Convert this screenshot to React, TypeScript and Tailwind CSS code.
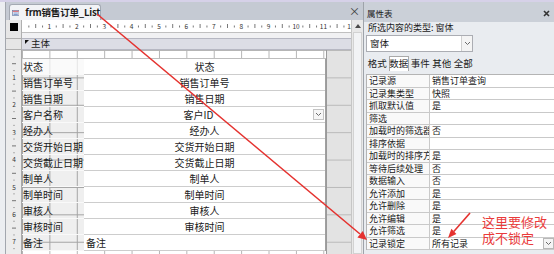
import React from 'react';

interface FormRow {
  label: string;
  field: string;
  combo?: boolean;
  left?: boolean;
}

const formRows: FormRow[] = [
  { label: '状态', field: '状态' },
  { label: '销售订单号', field: '销售订单号' },
  { label: '销售日期', field: '销售日期' },
  { label: '客户名称', field: '客户ID', combo: true },
  { label: '经办人', field: '经办人' },
  { label: '交货开始日期', field: '交货开始日期' },
  { label: '交货截止日期', field: '交货截止日期' },
  { label: '制单人', field: '制单人' },
  { label: '制单时间', field: '制单时间' },
  { label: '审核人', field: '审核人' },
  { label: '审核时间', field: '审核时间' },
  { label: '备注', field: '备注', left: true },
];

const props: [string, string][] = [
  ['记录源', '销售订单查询'],
  ['记录集类型', '快照'],
  ['抓取默认值', '是'],
  ['筛选', ''],
  ['加载时的筛选器', '否'],
  ['排序依据', ''],
  ['加载时的排序方式', '是'],
  ['等待后续处理', '否'],
  ['数据输入', '否'],
  ['允许添加', '是'],
  ['允许删除', '是'],
  ['允许编辑', '是'],
  ['允许筛选', '是'],
  ['记录锁定', '所有记录'],
];

const tabs = ['格式', '数据', '事件', '其他', '全部'];
const STEP = 27.4;

function Chevron() {
  return (
    <svg width="7" height="5" viewBox="0 0 7 5">
      <path d="M1 1 L3.5 3.5 L6 1" fill="none" stroke="#6b6b6b" strokeWidth="1" />
    </svg>
  );
}

function FormIcon() {
  return (
    <svg width="10" height="8" viewBox="0 0 10 8">
      <rect x="0.5" y="0.5" width="9" height="7" fill="#fbf4f6" stroke="#7284a8" />
      <rect x="1" y="1" width="8" height="1.4" fill="#d7616b" />
      <line x1="2" y1="4" x2="8" y2="4" stroke="#4b79c4" />
      <line x1="2" y1="6" x2="8" y2="6" stroke="#4b79c4" />
    </svg>
  );
}

function HRuler() {
  const marks: React.ReactNode[] = [];
  for (let n = 0; n < 13; n++) {
    for (let q = 1; q < 4; q++) {
      const x = n * STEP + (q * STEP) / 4;
      marks.push(
        <line key={`${n}-${q}`} x1={x} x2={x} y1={q === 2 ? 4 : 5.5} y2={q === 2 ? 8 : 7.5} stroke="#555" strokeWidth="0.8" />,
      );
    }
    if (n > 0)
      marks.push(
        <text key={`t${n}`} x={n * STEP} y={9} fontSize="6.5" textAnchor="middle" fill="#333">
          {n}
        </text>,
      );
  }
  return (
    <svg width="329" height="13" className="block">
      {marks}
    </svg>
  );
}

function VRuler() {
  const marks: React.ReactNode[] = [];
  for (let n = 0; n < 8; n++) {
    for (let q = 1; q < 4; q++) {
      const y = n * STEP + (q * STEP) / 4;
      marks.push(
        <line key={`${n}-${q}`} x1={q === 2 ? 6 : 7.5} x2={q === 2 ? 10 : 8.5} y1={y} y2={y} stroke="#555" strokeWidth="0.8" />,
      );
    }
    if (n > 0)
      marks.push(
        <text key={`t${n}`} x={8} y={n * STEP + 2.5} fontSize="6.5" textAnchor="middle" fill="#333">
          {n}
        </text>,
      );
  }
  return (
    <svg width="15" height="204" className="block">
      {marks}
    </svg>
  );
}

export default function App() {
  return (
    <div className="relative flex h-[254px] w-[554px] flex-col overflow-hidden bg-[#e9ecf0] font-['Noto_Sans_CJK_SC','Noto_Sans',sans-serif] text-[#1a1a1a]">
      <div className="h-[2px] shrink-0 bg-[#d6d1e8]" />
      <div className="flex min-h-0 flex-1">
        <div className="w-[6px] border-r border-[#a3a7ae] bg-[#eceef1]" />

        {/* form design window */}
        <div className="flex w-[358px] flex-col border-r border-[#9ea3aa]">
          <div className="flex h-[18px] shrink-0 items-end bg-[#c5cad3] pl-[3px]">
            <div className="flex h-[16px] w-[92px] items-center gap-[6px] rounded-t-[3px] border border-b-0 border-[#a4a9b2] bg-[#f2f3f6] pl-[2px]">
              <FormIcon />
              <span className="whitespace-nowrap text-[9.5px] font-bold leading-none tracking-[-0.2px]">frm销售订单_List</span>
            </div>
            <span className="mr-[3px] ml-auto self-center text-[11px] leading-none text-[#3a3a3a]">×</span>
          </div>

          <div className="flex min-h-0 flex-1">
            <div className="flex w-[345px] flex-col">
              {/* ruler */}
              <div className="flex h-[13px] shrink-0">
                <div className="flex w-[16px] items-center justify-center border-r border-[#b0b0b0] bg-[#e6e6e6]">
                  <div className="h-[8px] w-[8px] bg-black" />
                </div>
                <div className="w-[329px] border-b border-[#c0c0c0] bg-white">
                  <HRuler />
                </div>
              </div>
              <div className="flex h-[5px] shrink-0">
                <div className="w-[16px] border-r border-[#b0b0b0] bg-[#e6e6e6]" />
                <div className="flex-1 bg-[#f1f1f3]" />
              </div>
              {/* section bar */}
              <div className="flex h-[12px] shrink-0">
                <div className="w-[16px] border-y border-r border-[#b0b0b0] bg-[#e6e6e6]" />
                <div className="flex flex-1 items-center gap-[2px] border-y border-[#b6b7c2] bg-[#dcdde5] pl-[3px]">
                  <svg width="4" height="4" viewBox="0 0 4 4" className="mt-[1px] self-start">
                    <path d="M0 0 L4 0 L0 4 Z" fill="#111" />
                  </svg>
                  <span className="text-[9.5px] leading-none">主体</span>
                </div>
              </div>

              {/* detail */}
              <div className="flex min-h-0 flex-1">
                <div className="w-[16px] overflow-hidden border-r border-[#a8a8a8] bg-[#ececec]">
                  <VRuler />
                </div>
                <div className="w-[304px] bg-white bg-[image:linear-gradient(to_right,#b4b4b4_1px,transparent_1px),linear-gradient(to_bottom,#b4b4b4_1px,transparent_1px)] bg-[length:27.4px_27.4px] bg-size-[27.4px_27.4px] pt-[8px]">
                  <div className="flex border-t border-[#bdbdbd]">
                    <div className="w-[62px] bg-[#efefef] bg-[image:linear-gradient(to_right,#a3a3a3_1px,transparent_1px),linear-gradient(to_bottom,#a3a3a3_1px,transparent_1px)] bg-[length:27.4px_27.4px] bg-size-[27.4px_27.4px] bg-[position:0_-9px] bg-position-[0_-9px]">
                      {formRows.map((r, i) => (
                        <div
                          key={r.label}
                          className={`flex h-[16px] items-center whitespace-nowrap border-b border-[#f9f9f9] pl-[1px] text-[10px] leading-none ${i === 0 ? 'bg-white/70' : ''}`}
                        >
                          {r.label}
                        </div>
                      ))}
                    </div>
                    <div className="w-[242px] border-r border-[#a0a0a0]">
                      {formRows.map((r) => (
                        <div
                          key={r.label}
                          className={`flex h-[16px] items-center border-b border-[#cdcdcd] bg-white text-[10px] leading-none ${r.left ? 'pl-[2px]' : 'justify-center'}`}
                        >
                          {r.combo ? (
                            <>
                              <span className="flex-1 text-center">{r.field}</span>
                              <span className="mr-[1px] flex h-[11px] w-[11px] items-center justify-center border border-[#c4c4c4] bg-[#f6f6f6]">
                                <Chevron />
                              </span>
                            </>
                          ) : (
                            r.field
                          )}
                        </div>
                      ))}
                    </div>
                  </div>
                </div>
                <div className="w-[25px] border-l border-[#9a9a9a] bg-[#e3e3e3] bg-[image:linear-gradient(to_bottom,#b9b9b9_1px,transparent_1px)] bg-[length:27.4px_27.4px] bg-size-[27.4px_27.4px]" />
              </div>
            </div>

            {/* scrollbar */}
            <div className="flex w-[12px] flex-col border-l border-[#c6c6c6] bg-[#e8e8e8]">
              <div className="flex h-[12px] items-center justify-center">
                <svg width="6" height="4" viewBox="0 0 6 4">
                  <path d="M0 4 L3 0 L6 4 Z" fill="#4a4a4a" />
                </svg>
              </div>
              <div className="mx-[1px] flex-1 border border-[#d2d2d2] bg-[#f2f3f5]" />
            </div>
          </div>
        </div>

        {/* property sheet */}
        <div className="flex w-[190px] flex-col">
          <div className="flex h-[20px] shrink-0 items-center bg-[#cbd0d8] pl-[3px] pr-[4px]">
            <span className="pt-[2px] text-[8.5px] leading-none">属性表</span>
            <svg width="7" height="7" viewBox="0 0 7 7" className="ml-auto mt-[2px]">
              <path d="M1 1 L6 6 M6 1 L1 6" stroke="#333" strokeWidth="1.6" />
            </svg>
          </div>
          <div className="flex h-[11px] items-center whitespace-nowrap pl-[4px] text-[9px] leading-none">所选内容的类型: 窗体</div>
          <div className="mt-[2px] ml-[2px] flex h-[17px] w-[107px] items-center border border-[#abadb3] bg-white">
            <span className="flex-1 pl-[3px] text-[9.5px] leading-none">窗体</span>
            <span className="flex h-full w-[11px] items-center justify-center border-l border-[#d0d0d0] bg-[#f4f4f4]">
              <Chevron />
            </span>
          </div>
          <div className="mt-[4px] ml-[3px] flex h-[15px] items-stretch gap-[1px]">
            {tabs.map((t) => (
              <span
                key={t}
                className={`flex w-[20.5px] items-center justify-center whitespace-nowrap text-[9.5px] leading-none ${t === '数据' ? 'border border-b-0 border-[#a9a9a9] bg-white' : ''}`}
              >
                {t}
              </span>
            ))}
          </div>
          <div className="mt-[3px] ml-[2px] border-t border-l border-[#b4b4b4]">
            {props.map(([k, v], i) => (
              <div key={k} className="flex h-[12.5px] border-b border-[#c9c9c9] text-[9px] leading-none">
                <div className="flex w-[63px] items-center overflow-hidden whitespace-nowrap border-r border-[#c9c9c9] bg-[#f9f9f9] pl-[2px]">
                  {k}
                </div>
                <div className="flex flex-1 items-center bg-white pl-[2px]">
                  <span className="flex-1">{v}</span>
                  {i === props.length - 1 && (
                    <span className="flex h-full w-[11px] items-center justify-center border border-[#b8b8b8] bg-[#f4f4f4]">
                      <Chevron />
                    </span>
                  )}
                </div>
              </div>
            ))}
          </div>
        </div>
      </div>

      {/* red annotation */}
      <svg width="554" height="254" className="pointer-events-none absolute left-0 top-0">
        <line x1="97" y1="14" x2="360" y2="234" stroke="#e5322f" strokeWidth="1.6" />
        <path d="M367 240 L357.4 237.4 L362.8 231 Z" fill="#e5322f" />
        <line x1="470" y1="213" x2="453.8" y2="231.5" stroke="#e5322f" strokeWidth="1.6" />
        <path d="M448 238 L456.4 234 L451.4 228.8 Z" fill="#e5322f" />
      </svg>
      <div className="pointer-events-none absolute left-[482px] top-[214px] text-[13px] leading-[16px] text-[#ea3b3b]">
        <div>这里要修改</div>
        <div>成不锁定</div>
      </div>
    </div>
  );
}
